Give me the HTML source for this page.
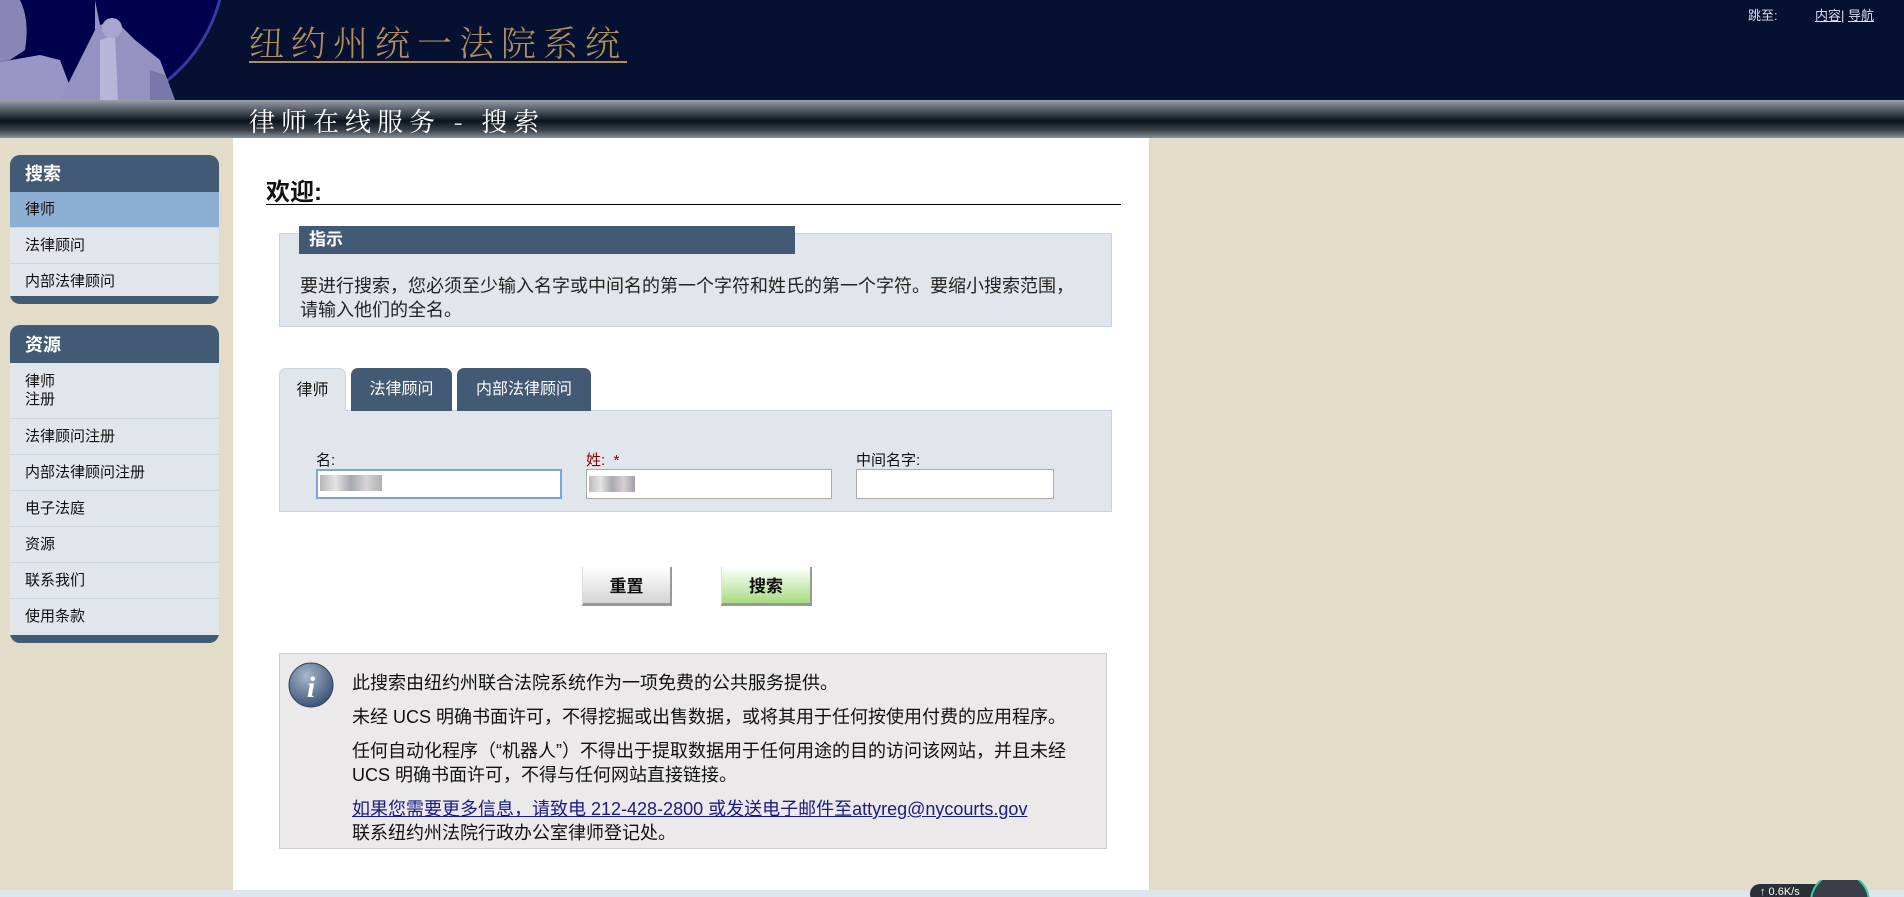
<!DOCTYPE html>
<html style="width:1904px;height:897px;overflow:hidden"><head><meta charset="utf-8"><style>
*{margin:0;padding:0;box-sizing:border-box}
html,body{width:1904px;height:897px;overflow:hidden}
body{background:#e3dcc8;font-family:"Liberation Sans","Noto Sans CJK SC",sans-serif;position:relative;color:#111}
.a{position:absolute}
#hdr{left:0;top:0;width:1904px;height:100px;background:#061030}
#bar{left:0;top:100px;width:1904px;height:38px;background:linear-gradient(#9aa0a8 0%,#4a525c 30%,#0b141c 55%,#3a434c 80%,#8a929a 100%)}
.title{left:249px;top:17px;font-size:35px;color:#b08f5c;letter-spacing:7px;text-decoration:underline;text-decoration-thickness:2px;text-underline-offset:5px;font-family:"Noto Serif CJK SC","Liberation Serif",serif;font-weight:300}
.sub{left:249px;top:102px;font-size:26px;color:#fff;letter-spacing:6px;font-family:"Noto Serif CJK SC",serif}
.skip{top:5px;font-size:13px;color:#dde}
.skip u{color:#dde}
#main{left:233px;top:138px;width:916px;height:752px;background:#fff}
#bot{left:0;top:890px;width:1904px;height:7px;background:#dfe5ec}
.box{left:10px;width:209px;background:#e1e6ec;border-radius:10px;overflow:hidden}
.box .h{background:#435a75;color:#fff;font-weight:bold;font-size:18px;padding-left:15px}
.box .i{height:36px;line-height:35px;font-size:15px;padding-left:15px;border-bottom:1px solid #cfd5dc;color:#111}
.box .f{height:8px;background:#435a75}
.panel{background:#e1e6ec;border:1px solid #c9d3de}
.tab{top:368px;height:43px;border-radius:7px 7px 0 0;font-size:16px;text-align:center;line-height:44px;background:#435a75;color:#fff}
.lbl{top:449px;font-size:15px}
.inp{top:469px;height:30px;background:#fff;border:1px solid #aaa}
.btn{top:567px;height:39px;font-size:17px;font-weight:bold;text-align:center;line-height:39px;border-right:2px solid #999;border-bottom:3px solid #999}
.info p{font-size:18px;line-height:24px;margin-bottom:10px}
</style></head><body>
<div id="hdr" class="a"></div>
<svg class="a" style="left:0;top:0" width="230" height="100">
<circle cx="70" cy="-40" r="155" fill="#00004d" stroke="#3a3a9e" stroke-width="3"/>
<path d="M0 0 L20 0 Q30 20 25 50 L10 60 L0 62Z" fill="#8886b6"/>
<path d="M0 62 L40 55 L60 60 L75 100 L0 100Z" fill="#9896c4"/>
<path d="M95 0 L100 25 L115 20 L135 40 L160 60 L175 100 L60 100 L80 60 L95 30Z" fill="#9492c0"/>
<path d="M100 40 L115 35 L118 100 L100 100Z" fill="#b8b6d8"/>
<path d="M150 70 L165 75 L175 100 L150 100Z" fill="#7a78aa"/>
<circle cx="112" cy="28" r="10" fill="#a8a6d0"/>
</svg>
<div class="a title">纽约州统一法院系统</div>
<div class="a skip" style="left:1748px">跳至:</div>
<div class="a skip" style="left:1815px"><u>内容</u>| <u>导航</u></div>
<div id="bar" class="a"></div>
<div class="a sub">律师在线服务 - 搜索</div>
<div id="main" class="a"></div>
<div id="bot" class="a"></div>

<div class="a box" style="top:155px;height:149px">
<div class="h" style="height:37px;line-height:38px">搜索</div>
<div class="i" style="background:#8eafd4">律师</div>
<div class="i">法律顾问</div>
<div class="i">内部法律顾问</div>
<div class="f" style="position:absolute;bottom:0;left:0;right:0"></div>
</div>
<div class="a box" style="top:325px;height:318px">
<div class="h" style="height:38px;line-height:40px">资源</div>
<div class="i" style="height:56px;line-height:18px;padding-top:10px">律师<br>注册</div>
<div class="i">法律顾问注册</div>
<div class="i">内部法律顾问注册</div>
<div class="i">电子法庭</div>
<div class="i">资源</div>
<div class="i">联系我们</div>
<div class="i" style="border:none">使用条款</div>
<div class="f" style="position:absolute;bottom:0;left:0;right:0"></div>
</div>

<div class="a" style="left:266px;top:172px;font-size:24px;font-weight:bold">欢迎:</div>
<div class="a" style="left:266px;top:204px;width:855px;height:1px;background:#000"></div>

<div class="a panel" style="left:279px;top:233px;width:833px;height:94px"></div>
<div class="a" style="left:299px;top:226px;width:496px;height:28px;background:#435a75;color:#fff;font-weight:bold;font-size:17px;line-height:28px;padding-left:10px">指示</div>
<div class="a" style="left:300px;top:274px;width:778px;font-size:18px;line-height:24px;color:#222">要进行搜索，您必须至少输入名字或中间名的第一个字符和姓氏的第一个字符。要缩小搜索范围，请输入他们的全名。</div>

<div class="a panel" style="left:279px;top:410px;width:833px;height:102px"></div>
<div class="a tab" style="left:279px;width:67px;background:#e1e6ec;color:#111;border:1px solid #c9d3de;border-bottom:none">律师</div>
<div class="a tab" style="left:351px;width:101px">法律顾问</div>
<div class="a tab" style="left:457px;width:134px">内部法律顾问</div>
<div class="a lbl" style="left:316px">名:</div>
<div class="a lbl" style="left:586px;color:#8b0000">姓: &nbsp;*</div>
<div class="a lbl" style="left:856px">中间名字:</div>
<div class="a inp" style="left:316px;width:246px;border:2px solid #7aa3e0"><div style="margin:4px 2px;width:62px;height:16px;background:linear-gradient(90deg,#b8b4b8,#e6e2e4,#a8a8b0,#d8d2d2,#b0b0b4)"></div></div>
<div class="a inp" style="left:586px;width:246px"><div style="margin:6px 2px;width:46px;height:16px;background:linear-gradient(90deg,#c0b8b8,#e8e4e4,#a8a8b0,#d8d0d0,#a0a0a8)"></div></div>
<div class="a inp" style="left:856px;width:198px"></div>

<div class="a btn" style="left:582px;width:90px;background:linear-gradient(#fff,#d4d4d4);border-left:1px solid #ddd">重置</div>
<div class="a btn" style="left:721px;width:91px;background:linear-gradient(#fff,#a8dc80);border-left:1px solid #ddd">搜索</div>

<div class="a info" style="left:279px;top:653px;width:828px;height:196px;background:#ebe9e9;border:1px solid #ccc;padding:17px 20px 0 72px">
<p>此搜索由纽约州联合法院系统作为一项免费的公共服务提供。</p>
<p>未经 UCS 明确书面许可，不得挖掘或出售数据，或将其用于任何按使用付费的应用程序。</p>
<p>任何自动化程序（“机器人”）不得出于提取数据用于任何用途的目的访问该网站，并且未经 UCS 明确书面许可，不得与任何网站直接链接。</p>
<p style="white-space:nowrap"><u style="color:#1a1a8a">如果您需要更多信息，请致电 212-428-2800 或发送电子邮件至attyreg@nycourts.gov</u><br>联系纽约州法院行政办公室律师登记处。</p>
</div>
<svg class="a" style="left:287px;top:661px" width="48" height="48"><defs><radialGradient id="g" cx="40%" cy="30%" r="70%"><stop offset="0" stop-color="#a8b8cc"/><stop offset="1" stop-color="#3d5578"/></radialGradient></defs><circle cx="24" cy="24" r="22" fill="url(#g)" stroke="#2e4462"/><text x="24" y="36" font-family="Liberation Serif" font-style="italic" font-weight="bold" font-size="30" fill="#fff" text-anchor="middle">i</text></svg>

<div class="a" style="left:1745px;top:880px;width:160px;height:17px;overflow:hidden">
<div class="a" style="left:5px;top:4px;width:80px;height:20px;border-radius:10px;background:#2a2e36;color:#fff;font-size:11px;padding:2px 0 0 10px">↑ 0.6K/s</div>
<div class="a" style="left:65px;top:-8px;width:60px;height:60px;border-radius:50%;background:#3a3e48;border:2px solid #40c8a8"></div>
</div>
</body></html>
